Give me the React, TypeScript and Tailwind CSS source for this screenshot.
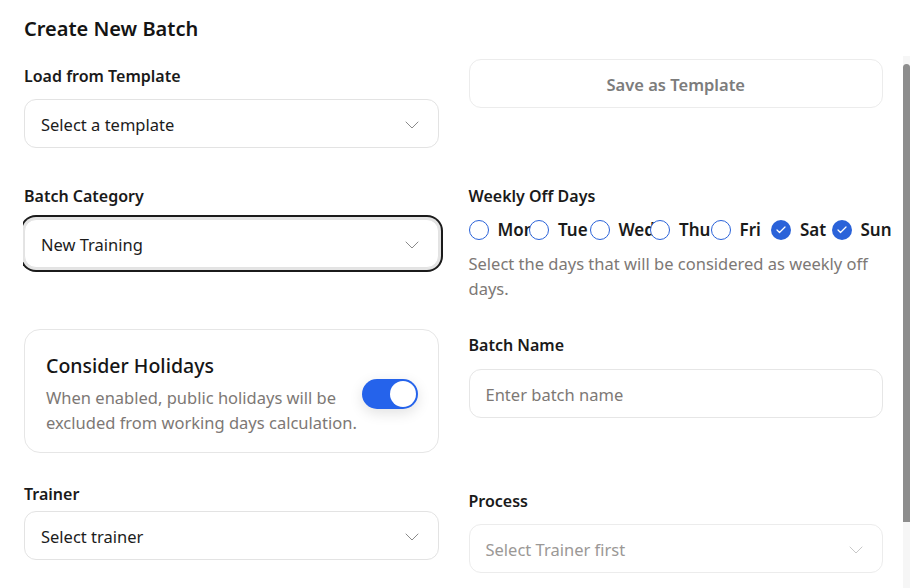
import { ChevronDown, Check } from "lucide-react"

const days = [
    { label: "Mon", checked: false },
    { label: "Tue", checked: false },
    { label: "Wed", checked: false },
    { label: "Thu", checked: false },
    { label: "Fri", checked: false },
    { label: "Sat", checked: true },
    { label: "Sun", checked: true },
]

function SelectBox({ value, muted, focused }: { value: string; muted?: boolean; focused?: boolean }) {
    return (
        <div
            className={`flex h-[49px] items-center justify-between rounded-xl border bg-white pl-4 pr-[14px] pt-[3px] ${
                muted ? "border-[#ececec] text-[#9b9896]" : "border-[#e3e3e3] text-[#1c1c1c]"
            } ${focused ? "shadow-[0_0_0_2px_#e4e4e4,0_0_0_4px_#1b1b1b]" : ""}`}
        >
            <span className="text-[16.5px]">{value}</span>
            <ChevronDown className={`h-6 w-6 ${muted ? "text-[#c8c8c8]" : "text-[#8a8a8a]"}`} strokeWidth={1} />
        </div>
    )
}

function Label({ children, className = "" }: { children: React.ReactNode; className?: string }) {
    return <div className={`h-6 text-[16px] font-semibold leading-6 text-[#1a1a1a] ${className}`}>{children}</div>
}

export default function App() {
    return (
        <div
            className="flex h-[588px] w-[910px] flex-col overflow-hidden bg-white"
            style={{ fontFamily: '"Noto Sans", "Open Sans", sans-serif' }}
        >
            {/* Header */}
            <h1 className="h-[56px] pl-6 pt-[14px] text-[20px] font-semibold leading-[30px] text-[#141414]">
                Create New Batch
            </h1>

            <div className="flex min-h-0 flex-1 pl-[23px]">
                {/* Scroll area */}
                <div className="min-w-0 flex-1 overflow-hidden pl-[1px] pr-5">
                    {/* Row 1 */}
                    <div className="grid grid-cols-2 gap-x-[30px]">
                        <div className="pt-2">
                            <Label>Load from Template</Label>
                            <div className="mt-[11px]">
                                <SelectBox value="Select a template" />
                            </div>
                        </div>
                        <div className="pt-[3px]">
                            <button className="flex h-[49px] w-full items-center justify-center rounded-xl border border-[#ececec] bg-white pt-[4px] text-[16.5px] font-semibold text-[#7c7c7c]">
                                Save as Template
                            </button>
                        </div>
                    </div>

                    {/* Row 2 */}
                    <div className="mt-9 grid grid-cols-2 gap-x-[30px]">
                        <div>
                            <Label>Batch Category</Label>
                            <div className="mt-[11px]">
                                <SelectBox value="New Training" focused />
                            </div>
                        </div>
                        <div>
                            <Label>Weekly Off Days</Label>
                            <div className="mt-[12px] flex">
                                {days.map((d) => (
                                    <div key={d.label} className="flex w-[60.5px] shrink-0 items-center gap-[9px] whitespace-nowrap">
                                        {d.checked ? (
                                            <span className="flex h-5 w-5 shrink-0 items-center justify-center rounded-full bg-[#2a62d9]">
                                                <Check className="h-3 w-3 text-white" strokeWidth={2.5} />
                                            </span>
                                        ) : (
                                            <span className="h-5 w-5 shrink-0 rounded-full border border-[#2a62d9] bg-white" />
                                        )}
                                        <span className="text-[17px] font-semibold leading-5 text-[#1a1a1a]">{d.label}</span>
                                    </div>
                                ))}
                            </div>
                            <p className="mt-[11px] text-[16.5px] leading-[25px] text-[#7d7875]">
                                Select the days that will be considered as weekly off days.
                            </p>
                        </div>
                    </div>

                    {/* Row 3 */}
                    <div className="mt-[28px] grid grid-cols-2 gap-x-[30px]">
                        <div className="flex h-[124px] items-center justify-between rounded-2xl border border-[#e6e6e6] pl-[21px] pr-5 pt-[6px]">
                            <div>
                                <div className="text-[19.5px] font-medium leading-6 text-[#161616]">Consider Holidays</div>
                                <p className="mt-[7px] text-[16.5px] leading-[25px] text-[#7d7875]">
                                    When enabled, public holidays will be
                                    <br />
                                    excluded from working days calculation.
                                </p>
                            </div>
                            <div className="flex h-[30px] w-[56px] shrink-0 items-center justify-end rounded-full bg-[#2563eb] px-[2px] shadow-[0_4px_14px_rgba(0,0,0,0.12)]">
                                <span className="h-[26px] w-[26px] rounded-full bg-white" />
                            </div>
                        </div>
                        <div className="pt-1">
                            <Label>Batch Name</Label>
                            <div className="mt-3 flex h-[49px] items-center rounded-xl border border-[#e6e6e6] px-4 pt-[3px] text-[16.5px] text-[#7d7875]">
                                Enter batch name
                            </div>
                        </div>
                    </div>

                    {/* Row 4 */}
                    <div className="mt-[29px] grid grid-cols-2 gap-x-[30px]">
                        <div>
                            <Label>Trainer</Label>
                            <div className="mt-[5px]">
                                <SelectBox value="Select trainer" />
                            </div>
                        </div>
                        <div className="pt-[7px]">
                            <Label>Process</Label>
                            <div className="mt-[11px]">
                                <SelectBox value="Select Trainer first" muted />
                            </div>
                        </div>
                    </div>
                </div>

                {/* Scrollbar */}
                <div className="flex w-[7px] shrink-0 flex-col bg-[#f6f6f6] pt-[8px]">
                    <div className="h-[458px] rounded-t-full bg-[#8d8d8d]" />
                </div>
            </div>
        </div>
    )
}
